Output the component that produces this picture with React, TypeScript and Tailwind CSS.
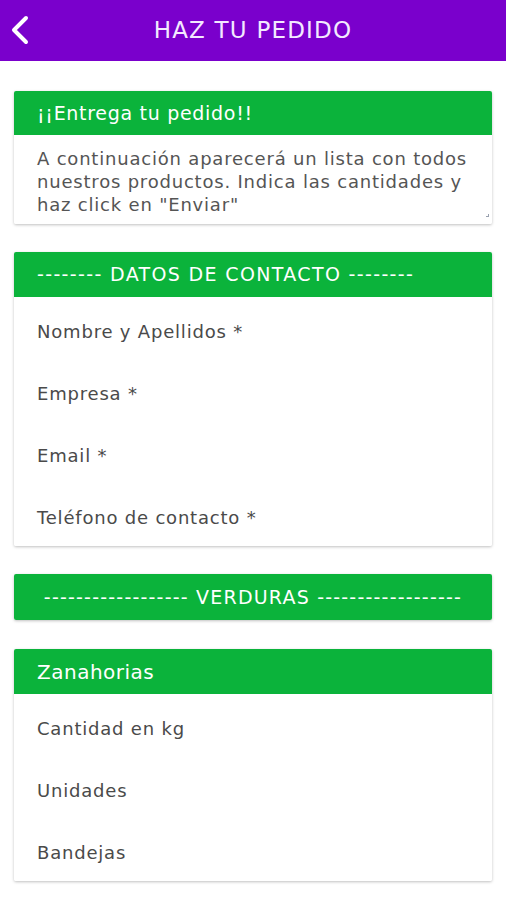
const font = { fontFamily: '"DejaVu Sans", "Noto Sans", sans-serif' };

function CardHeader({ children, className = "" }: { children: React.ReactNode; className?: string }) {
  return (
    <div className={`flex h-[44px] items-center bg-[#0bb33b] px-[23px] text-[19px] text-white ${className}`}>
      {children}
    </div>
  );
}

function Field({ label }: { label: string }) {
  return (
    <div className="flex h-[62px] items-center px-[23px] text-[18px] tracking-[0.8px] text-[#4a4a4a]">
      {label}
    </div>
  );
}

export default function App() {
  return (
    <div className="min-h-[900px] w-full bg-white" style={font}>
      <div className="relative flex h-[61px] items-center justify-center bg-[#7a00cc]">
        <svg
          className="absolute left-[9px] top-[15px]"
          width="22"
          height="30"
          viewBox="0 0 22 30"
          fill="none"
          stroke="white"
          strokeWidth="4"
          strokeLinecap="round"
          strokeLinejoin="round"
        >
          <polyline points="17,3 5,15 17,27" />
        </svg>
        <h1 className="text-[23px] tracking-[1.2px] text-[#f3e9ff]">HAZ TU PEDIDO</h1>
      </div>

      <div className="flex flex-col gap-[28px] px-[14px] pt-[30px]">
        <div className="overflow-hidden rounded-[2px] shadow-[0_1px_3px_rgba(0,0,0,0.25)]">
          <CardHeader className="tracking-[0.7px]">¡¡Entrega tu pedido!!</CardHeader>
          <div className="relative h-[89px] bg-white pl-[23px] pr-[12px] pt-[12px] text-[18px] leading-[23px] tracking-[0.8px] text-[#555]">
            A continuación aparecerá un lista con todos nuestros productos. Indica las cantidades y haz
            click en "Enviar"
            <span className="absolute bottom-[7px] right-[3px] h-[3px] w-[3px] border-b border-r border-gray-400" />
          </div>
        </div>

        <div className="overflow-hidden rounded-[2px] shadow-[0_1px_3px_rgba(0,0,0,0.25)]">
          <CardHeader className="h-[45px] tracking-[1.35px]">-------- DATOS DE CONTACTO --------</CardHeader>
          <div className="h-[249px] bg-white pt-[3px]">
            <Field label="Nombre y Apellidos *" />
            <Field label="Empresa *" />
            <Field label="Email *" />
            <Field label="Teléfono de contacto *" />
          </div>
        </div>

        <div className="overflow-hidden rounded-[2px] shadow-[0_1px_3px_rgba(0,0,0,0.25)]">
          <div className="flex h-[46px] items-center justify-center bg-[#0bb33b] text-[19px] tracking-[1.2px] text-white">
            ------------------ VERDURAS ------------------
          </div>
        </div>

        <div className="mt-[1px] overflow-hidden rounded-[2px] shadow-[0_1px_3px_rgba(0,0,0,0.25)]">
          <CardHeader className="h-[45px] text-[20px] tracking-[0.5px]">Zanahorias</CardHeader>
          <div className="h-[187px] bg-white pt-[3px]">
            <Field label="Cantidad en kg" />
            <Field label="Unidades" />
            <Field label="Bandejas" />
          </div>
        </div>
      </div>
    </div>
  );
}
